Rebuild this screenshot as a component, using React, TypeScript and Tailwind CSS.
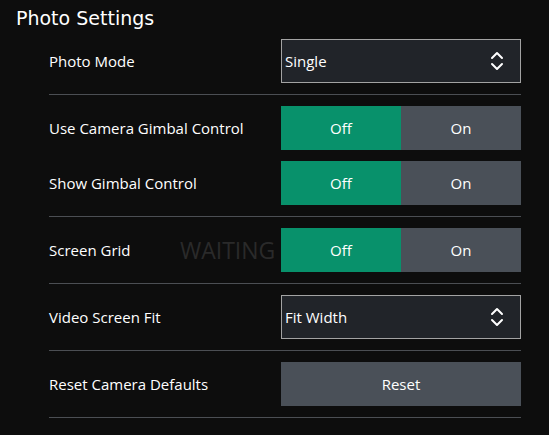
import React from "react";

function Chevrons() {
    return (
        <svg width="14" height="20" viewBox="0 0 14 20" fill="none" className="text-white">
            <path d="M2 7L7 2L12 7" stroke="currentColor" strokeWidth="2" strokeLinecap="round" strokeLinejoin="round" />
            <path d="M2 13L7 18L12 13" stroke="currentColor" strokeWidth="2" strokeLinecap="round" strokeLinejoin="round" />
        </svg>
    );
}

function Combo({ value }: { value: string }) {
    return (
        <div className="w-[240px] h-[44px] border border-[#a3a3a3] bg-[#212429] flex items-center justify-between pl-[3px] pr-[16px]">
            <span className="text-[15px] text-white">{value}</span>
            <Chevrons />
        </div>
    );
}

function Toggle() {
    return (
        <div className="w-[240px] h-[44px] flex text-[15px] text-white">
            <div className="flex-1 bg-[#08916b] flex items-center justify-center">Off</div>
            <div className="flex-1 bg-[#4a5058] flex items-center justify-center">On</div>
        </div>
    );
}

function Row({ label, children }: { label: string; children: React.ReactNode }) {
    return (
        <div className="flex items-center justify-between h-[44px]">
            <span className="text-[15px] text-white">{label}</span>
            {children}
        </div>
    );
}

function Sep() {
    return <div className="h-px bg-[#4b4e53] my-[11px]" />;
}

export default function App() {
    return (
        <div className="relative w-[549px] h-[435px] bg-[#0d0d0d] overflow-hidden" style={{ fontFamily: '"Open Sans", sans-serif' }}>
            {/* Title */}
            <div className="pl-[16px] pt-[6px] h-[39px] text-[19px] leading-[24px] text-white" style={{ fontFamily: '"DejaVu Sans", sans-serif' }}>
                Photo Settings
            </div>

            <div className="ml-[49px] w-[472px]">
                <Row label="Photo Mode">
                    <Combo value="Single" />
                </Row>
                <Sep />
                <div className="flex flex-col gap-[11px]">
                    <Row label="Use Camera Gimbal Control">
                        <Toggle />
                    </Row>
                    <Row label="Show Gimbal Control">
                        <Toggle />
                    </Row>
                </div>
                <Sep />
                <Row label="Screen Grid">
                    <Toggle />
                </Row>
                <Sep />
                <Row label="Video Screen Fit">
                    <Combo value="Fit Width" />
                </Row>
                <Sep />
                <Row label="Reset Camera Defaults">
                    <div className="w-[240px] h-[44px] bg-[#4a5058] flex items-center justify-center text-[15px] text-white">Reset</div>
                </Row>
                <Sep />
            </div>

            {/* Waiting overlay */}
            <div className="absolute left-[180px] top-[234px] text-[23px] leading-[32px] text-[#2a2a2a]">WAITING</div>
        </div>
    );
}
